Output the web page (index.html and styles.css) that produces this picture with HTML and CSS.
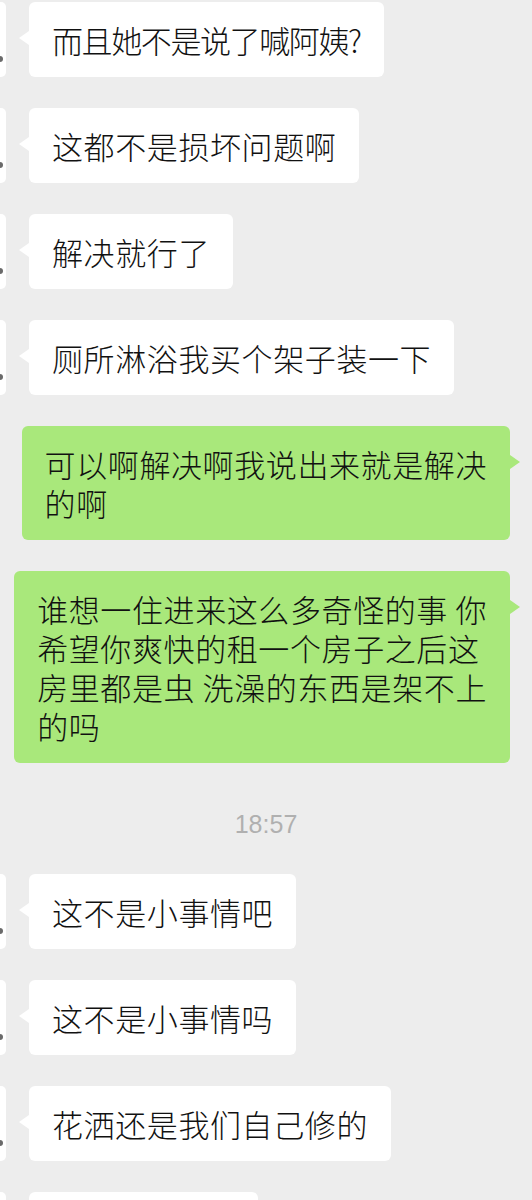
FILE: index.html
```html
<!DOCTYPE html>
<html lang="zh-CN">

<head>
    <meta charset="UTF-8">
    <meta name="viewport" content="width=device-width, initial-scale=1.0">
    <title>聊天记录</title>
    <link rel="stylesheet" href="styles.css">
</head>

<body>
    <div class="chat">
        <div class="row left">
            <div class="avatar"></div>
            <div class="bubble tight">而且她不是说了喊阿姨?</div>
        </div>
        <div class="row left">
            <div class="avatar"></div>
            <div class="bubble">这都不是损坏问题啊</div>
        </div>
        <div class="row left">
            <div class="avatar"></div>
            <div class="bubble">解决就行了</div>
        </div>
        <div class="row left">
            <div class="avatar"></div>
            <div class="bubble">厕所淋浴我买个架子装一下</div>
        </div>
        <div class="row right">
            <div class="bubble">可以啊解决啊我说出来就是解决<br>的啊</div>
        </div>
        <div class="row right">
            <div class="bubble">谁想一住进来这么多奇怪的事 你<br>希望你爽快的租一个房子之后这<br>房里都是虫 洗澡的东西是架不上<br>的吗</div>
        </div>
        <!-- 时间 -->
        <div class="time">18:57</div>
        <div class="row left">
            <div class="avatar"></div>
            <div class="bubble">这不是小事情吧</div>
        </div>
        <div class="row left">
            <div class="avatar"></div>
            <div class="bubble">这不是小事情吗</div>
        </div>
        <div class="row left">
            <div class="avatar"></div>
            <div class="bubble">花洒还是我们自己修的</div>
        </div>
        <div class="row left">
            <div class="avatar"></div>
            <div class="bubble cut">&nbsp;</div>
        </div>
    </div>
</body>

</html>
```

FILE: styles.css
```css
body {
    margin: 0;
    padding: 0;
    background: #ededed;
    font-family: "Noto Sans CJK SC", "Noto Sans", sans-serif;
}

.chat {
    display: flex;
    flex-direction: column;
    gap: 31px;
    padding-top: 2px;
    height: 1200px;
    overflow: hidden;
}

.row {
    display: flex;
    align-items: flex-start;
}

.row.right {
    justify-content: flex-end;
    padding-right: 22px;
}

.avatar {
    position: relative;
    width: 6px;
    height: 75px;
    margin-right: 23px;
    background: #ffffff;
    border-radius: 0 5px 5px 0;
    flex-shrink: 0;
}

.avatar::after {
    content: "";
    position: absolute;
    left: 0;
    top: 54px;
    width: 3px;
    height: 6px;
    background: #6a6a6a;
    border-radius: 0 3px 3px 0;
}

.bubble {
    position: relative;
    padding: 18px 23px;
    font-size: 31px;
    font-weight: 300;
    letter-spacing: 0.6px;
    line-height: 39px;
    color: #111111;
    background: #ffffff;
    border-radius: 6px;
    white-space: nowrap;
}

.bubble.tight {
    letter-spacing: -1.4px;
}

.bubble::before {
    content: "";
    position: absolute;
    top: 29px;
    width: 0;
    height: 0;
    border-top: 7px solid transparent;
    border-bottom: 7px solid transparent;
}

.left .bubble::before {
    left: -10px;
    border-right: 10px solid #ffffff;
}

.right .bubble {
    background: #a9e87b;
}

.right .bubble::before {
    right: -10px;
    border-left: 10px solid #a9e87b;
}

.bubble.cut {
    width: 183px;
}

.time {
    margin: 15px 0 4px 0;
    text-align: center;
    font-family: "Liberation Sans", sans-serif;
    font-size: 25px;
    line-height: 30px;
    color: #b0b0b0;
}
```
